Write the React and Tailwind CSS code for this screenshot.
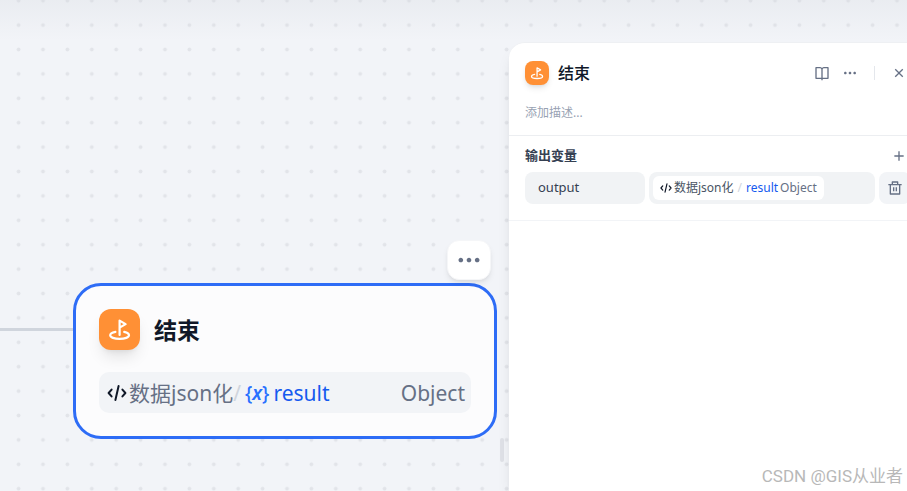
import { useState } from 'react'
import {
  RiAddLine,
  RiBookOpenLine,
  RiCloseLine,
  RiDeleteBinLine,
  RiMoreFill
} from 'react-icons/ri'

const EndIcon = ({ className }) => (
  <svg
    viewBox="0 0 41 41"
    className={className}
    fill="none"
    stroke="currentColor"
    strokeWidth="2.2"
    strokeLinecap="round"
    strokeLinejoin="round"
    aria-hidden="true"
  >
    <path d="M20.6 26V11.6l6 3.5-6 3.5" />
    <path d="M16.4 22.900c-3.100.6-5.200 1.900-5.200 3.400 0 2.100 4.200 3.600 9.400 3.600s9.400-1.500 9.400-3.600c0-1.500-1.900-2.700-4.800-3.400" />
  </svg>
)

const CodeIcon = ({ className }) => (
  <svg
    viewBox="0 0 20 20"
    className={className}
    fill="none"
    stroke="currentColor"
    strokeWidth="2"
    strokeLinecap="round"
    strokeLinejoin="round"
    aria-hidden="true"
  >
    <path d="M4.600 6.600 1.600 10 4.600 13.400" />
    <path d="M15.400 6.600 18.400 10 15.400 13.400" />
    <path d="M11.600 3 8.400 17" />
  </svg>
)

const DotGrid = () => (
  <svg className="absolute inset-0 h-full w-full" aria-hidden="true">
    <pattern id="dots" x="6.400" y="-11.500" width="24.400" height="24.400" patternUnits="userSpaceOnUse">
      <circle cx="12.200" cy="12.200" r="1.900" fill="#e2e4e9" />
    </pattern>
    <rect width="100%" height="100%" fill="url(#dots)" />
  </svg>
)

const EndNode = () => (
  <section className="absolute left-[73px] top-[283px] w-[424px] rounded-[28px] border-3 border-[#2d6cf6] bg-[#fcfcfd] p-[23px]">
    <div className="flex items-center gap-[14px]">
      <span className="flex size-[41px] items-center justify-center rounded-xl bg-[#ff9035] text-white shadow-lg shadow-black/10">
        <EndIcon className="size-full" />
      </span>
      <h2 className="text-[23px] font-bold leading-8 text-[#101828]">结束</h2>
    </div>
    <div className="mt-[22px] flex h-[41px] items-center rounded-[10px] bg-[#f2f4f7] pl-2 pr-[6px] text-[21px] leading-8 text-[#667085]">
      <CodeIcon className="mr-[2px] size-5 text-[#101828]" />
      <span>数据json化</span>
      <span className="mr-1 text-[#d0d5dd]">/</span>
      <span className="mr-1 text-[19px] font-medium text-[#2970ff]">
        {'{'}<i className="font-semibold">x</i>{'}'}
      </span>
      <span className="text-[#155aef]">result</span>
      <span className="ml-auto">Object</span>
    </div>
  </section>
)

const NodeMenu = () => (
  <button
    type="button"
    aria-label="更多"
    className="absolute left-[447px] top-[240px] flex h-10 w-11 items-center justify-center rounded-xl border border-[#f5f6f8] bg-white text-[#667085] shadow-md shadow-black/8"
  >
    <RiMoreFill className="size-7" />
  </button>
)

const PanelHeader = ({ description, onDescriptionChange }) => (
  <header className="border-b border-[#eceef1] px-4 pb-3 pt-[18px]">
    <div className="flex items-center">
      <span className="flex size-6 items-center justify-center rounded-lg bg-[#ff9035] text-white shadow-md shadow-black/10">
        <EndIcon className="size-full" />
      </span>
      <h1 className="ml-[9px] text-base font-medium leading-6 text-[#101828]">结束</h1>
      <div className="ml-auto flex items-center text-[#667085]">
        <button type="button" aria-label="帮助文档" className="flex size-6 items-center justify-center">
          <RiBookOpenLine className="size-4" />
        </button>
        <button type="button" aria-label="更多操作" className="ml-1 flex size-6 items-center justify-center">
          <RiMoreFill className="size-4" />
        </button>
        <span className="mx-3 h-[14px] w-px bg-[#e4e7ec]" />
        <button type="button" aria-label="关闭" className="flex size-6 items-center justify-center">
          <RiCloseLine className="size-4" />
        </button>
      </div>
    </div>
    <input
      type="text"
      aria-label="描述"
      placeholder="添加描述..."
      value={description}
      onChange={(e) => onDescriptionChange(e.target.value)}
      className="mt-4 block h-[22px] w-full text-xs placeholder-[#98a2b3] outline-none"
    />
  </header>
)

const OutputVars = ({ name, onNameChange }) => (
  <section className="border-b border-[#f2f4f7] px-4 pb-4 pt-2">
    <div className="flex h-6 items-center justify-between">
      <h2 className="text-[13px] font-bold text-[#354052]">输出变量</h2>
      <button type="button" aria-label="添加变量" className="flex size-6 items-center justify-center text-[#667085]">
        <RiAddLine className="size-4" />
      </button>
    </div>
    <div className="mt-1 flex h-8 gap-1">
      <input
        type="text"
        aria-label="变量名"
        value={name}
        onChange={(e) => onNameChange(e.target.value)}
        className="w-[120px] rounded-lg bg-[#f1f3f5] px-[13px] text-[13px] text-[#354052] outline-none"
      />
      <button type="button" className="flex flex-1 items-center rounded-lg bg-[#f1f3f5] p-1 text-xs">
        <span className="flex h-6 items-center rounded-md bg-white px-[7px] text-[#495464]">
          <CodeIcon className="mr-[2px] size-3 text-[#101828]" />
          数据json化
          <span className="mx-1 text-[#d0d5dd]">/</span>
          <span className="text-[#155aef]">result</span>
          <span className="ml-[2px] text-[#667085]">Object</span>
        </span>
      </button>
      <button
        type="button"
        aria-label="删除变量"
        className="flex w-8 items-center justify-center rounded-lg bg-[#f2f4f7] text-[#667085]"
      >
        <RiDeleteBinLine className="size-4" />
      </button>
    </div>
  </section>
)

export default function App() {
  const [description, setDescription] = useState('')
  const [name, setName] = useState('output')

  return (
    <div className="relative flex h-screen overflow-hidden bg-[#f2f4f8] font-['Noto_Sans','Noto_Sans_CJK_SC',sans-serif]">
      <DotGrid />
      <div className="absolute inset-x-0 top-0 h-10 bg-linear-to-b from-gray-300/25 to-transparent" />

      <main className="relative min-w-0 flex-1">
        <div className="absolute left-0 top-[328px] h-[3px] w-[73px] bg-[#d0d5dd]" />
        <EndNode />
        <NodeMenu />
        <div className="absolute right-[5px] top-[438px] h-6 w-1 rounded-xs bg-[#dfe1e7]" />
      </main>

      <aside className="relative -mr-5 mt-[42px] w-[418px] shrink-0 rounded-tl-2xl border-t border-[#eef0f3] bg-white shadow-lg shadow-black/10">
        <PanelHeader description={description} onDescriptionChange={setDescription} />
        <OutputVars name={name} onNameChange={setName} />
      </aside>

      <p className="absolute bottom-[3px] right-1 font-[Roboto,'Noto_Sans_CJK_SC',sans-serif] text-[17px] leading-6 text-[#b8b8b8]">
        CSDN @GIS从业者
      </p>
    </div>
  )
}
